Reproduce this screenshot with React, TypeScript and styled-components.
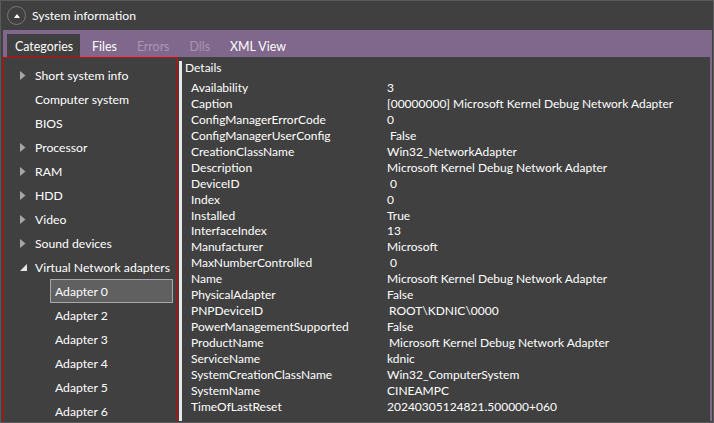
import styled, { createGlobalStyle } from 'styled-components';

const GlobalStyle = createGlobalStyle`
  html, body {
    margin: 0;
    padding: 0;
    background: #404040;
  }
  * {
    box-sizing: border-box;
  }
`;

const FONT = `'Lato', 'Noto Sans', sans-serif`;

const Window = styled.div`
  width: 714px;
  height: 423px;
  display: flex;
  flex-direction: column;
  background: #404040;
  border: 1px solid #5a5a5a;
  color: #ffffff;
  font-family: ${FONT};
  overflow: hidden;
`;

const TitleBar = styled.div`
  height: 29px;
  display: flex;
  align-items: center;
  gap: 6px;
  padding-left: 6px;
  flex-shrink: 0;
`;

const CollapseButton = styled.div`
  width: 19px;
  height: 19px;
  border-radius: 50%;
  border: 1px solid #777777;
  display: flex;
  align-items: center;
  justify-content: center;
`;

const Title = styled.div`
  font-size: 12.2px;
  color: #ffffff;
`;

const TabControl = styled.div`
  flex: 1;
  min-height: 0;
  display: flex;
  flex-direction: column;
  margin: 0 1px 1px 2px;
`;

const TabStrip = styled.div`
  height: 27px;
  flex-shrink: 0;
  background: #80688c;
  display: flex;
  align-items: flex-end;
  padding-left: 4px;
`;

const Tab = styled.div<{ $active?: boolean; $disabled?: boolean }>`
  height: 23px;
  display: flex;
  align-items: center;
  padding-top: 2px;
  font-size: 12.4px;
  padding-left: ${(p) => (p.$active ? 8 : 10)}px;
  padding-right: ${(p) => (p.$active ? 7 : 10)}px;
  margin-right: ${(p) => (p.$active ? '2px' : '0')};
  background: ${(p) => (p.$active ? '#404040' : 'transparent')};
  color: ${(p) => (p.$disabled ? '#a996b3' : '#ffffff')};
`;

const TabBody = styled.div`
  flex: 1;
  min-height: 0;
  display: flex;
  border-right: 2px solid #80688c;
`;

const Tree = styled.div`
  width: 175px;
  flex-shrink: 0;
  border: 1px solid #e00000;
  border-bottom: none;
  padding-top: 5px;
  display: flex;
  flex-direction: column;
  overflow: hidden;
`;

const TreeItem = styled.div<{ $level?: number; $selected?: boolean }>`
  height: 24px;
  flex-shrink: 0;
  display: flex;
  align-items: center;
  font-size: 12.2px;
  white-space: nowrap;
  color: #ffffff;
  padding-left: ${(p) => (p.$level ? 4 : 10)}px;
  margin-left: ${(p) => (p.$level ? 46 : 0)}px;
  margin-right: 4px;
  background: ${(p) => (p.$selected ? '#606060' : 'transparent')};
  border: 1px solid ${(p) => (p.$selected ? '#a8a8a8' : 'transparent')};
`;

const Expander = styled.span`
  width: 20px;
  flex-shrink: 0;
  display: flex;
  align-items: center;
  justify-content: flex-start;
  padding-left: 5px;
`;

const Splitter = styled.div`
  width: 5px;
  flex-shrink: 0;
  display: flex;
  justify-content: center;
  padding-top: 4px;
  &::after {
    content: '';
    width: 3px;
    background: #e8e8e8;
  }
`;

const Details = styled.div`
  flex: 1;
  display: flex;
  flex-direction: column;
  padding-left: 2px;
  overflow: hidden;
`;

const DetailsTitle = styled.div`
  font-size: 12px;
  height: 21px;
  line-height: 14px;
  padding-top: 4px;
`;

const PropList = styled.div`
  display: grid;
  grid-template-columns: 196px 1fr;
  grid-auto-rows: 15.95px;
  padding-left: 6px;
  padding-top: 2px;
`;

const PropKey = styled.div`
  font-size: 12px;
  line-height: 16px;
  color: #ffffff;
  white-space: nowrap;
`;

const PropValue = styled.div<{ $shift?: number }>`
  font-size: 12px;
  line-height: 16px;
  color: #ffffff;
  white-space: nowrap;
  padding-left: ${(p) => p.$shift ?? 0}px;
`;

const ArrowRight = () => (
  <svg width="6" height="9" viewBox="0 0 6 9">
    <path d="M0 0 L5.5 4.5 L0 9 Z" fill="#a6a6a6" />
  </svg>
);

const ArrowExpanded = () => (
  <svg width="7" height="7" viewBox="0 0 7 7">
    <path d="M7 0 L7 7 L0 7 Z" fill="#e6e6e6" />
  </svg>
);

const UpArrow = () => (
  <svg width="6" height="4" viewBox="0 0 6 4">
    <path d="M0 4 L3 0 L6 4 Z" fill="#ffffff" />
  </svg>
);

const categories = [
  { name: 'Short system info', children: true },
  { name: 'Computer system', children: false },
  { name: 'BIOS', children: false },
  { name: 'Processor', children: true },
  { name: 'RAM', children: true },
  { name: 'HDD', children: true },
  { name: 'Video', children: true },
  { name: 'Sound devices', children: true },
];

const adapters = ['Adapter 0', 'Adapter 2', 'Adapter 3', 'Adapter 4', 'Adapter 5', 'Adapter 6'];

const properties: [string, string, number?][] = [
  ['Availability', '3'],
  ['Caption', '[00000000] Microsoft Kernel Debug Network Adapter'],
  ['ConfigManagerErrorCode', '0'],
  ['ConfigManagerUserConfig', 'False', 3],
  ['CreationClassName', 'Win32_NetworkAdapter'],
  ['Description', 'Microsoft Kernel Debug Network Adapter'],
  ['DeviceID', '0', 3],
  ['Index', '0'],
  ['Installed', 'True'],
  ['InterfaceIndex', '13'],
  ['Manufacturer', 'Microsoft'],
  ['MaxNumberControlled', '0', 3],
  ['Name', 'Microsoft Kernel Debug Network Adapter'],
  ['PhysicalAdapter', 'False'],
  ['PNPDeviceID', 'ROOT\\KDNIC\\0000', 2],
  ['PowerManagementSupported', 'False'],
  ['ProductName', 'Microsoft Kernel Debug Network Adapter', 2],
  ['ServiceName', 'kdnic'],
  ['SystemCreationClassName', 'Win32_ComputerSystem'],
  ['SystemName', 'CINEAMPC'],
  ['TimeOfLastReset', '20240305124821.500000+060'],
];

const App = () => {
  return (
    <>
      <GlobalStyle />
      <Window>
        <TitleBar>
          <CollapseButton>
            <UpArrow />
          </CollapseButton>
          <Title>System information</Title>
        </TitleBar>
        <TabControl>
          <TabStrip>
            <Tab $active>Categories</Tab>
            <Tab>Files</Tab>
            <Tab $disabled>Errors</Tab>
            <Tab $disabled>Dlls</Tab>
            <Tab>XML View</Tab>
          </TabStrip>
          <TabBody>
            <Tree>
              {categories.map((c) => (
                <TreeItem key={c.name}>
                  <Expander>{c.children && <ArrowRight />}</Expander>
                  {c.name}
                </TreeItem>
              ))}
              <TreeItem>
                <Expander>
                  <ArrowExpanded />
                </Expander>
                Virtual Network adapters
              </TreeItem>
              {adapters.map((a, i) => (
                <TreeItem key={a} $level={1} $selected={i === 0}>
                  {a}
                </TreeItem>
              ))}
            </Tree>
            <Splitter />
            <Details>
              <DetailsTitle>Details</DetailsTitle>
              <PropList>
                {properties.map(([key, value, shift]) => (
                  <>
                    <PropKey key={key}>{key}</PropKey>
                    <PropValue key={key + '-v'} $shift={shift}>
                      {value}
                    </PropValue>
                  </>
                ))}
              </PropList>
            </Details>
          </TabBody>
        </TabControl>
      </Window>
    </>
  );
};

export default App;
